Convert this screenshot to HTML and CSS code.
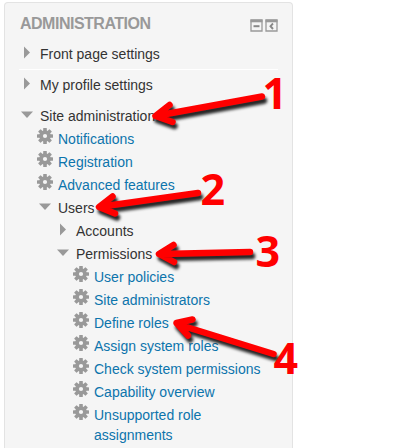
FILE: index.html
```html
<!DOCTYPE html>
<html lang="en">
<head>
<meta charset="utf-8">
<title>Administration</title>
<link rel="stylesheet" href="styles.css">
</head>
<body>
<svg class="defs" aria-hidden="true">
  <symbol id="gear" viewBox="0 0 16 16">
    <g fill="#999"><rect x="6.2" y="0" width="3.6" height="16" rx=".5"/><rect x="6.2" y="0" width="3.6" height="16" rx=".5" transform="rotate(45 8 8)"/><rect x="6.2" y="0" width="3.6" height="16" rx=".5" transform="rotate(90 8 8)"/><rect x="6.2" y="0" width="3.6" height="16" rx=".5" transform="rotate(135 8 8)"/><circle cx="8" cy="8" r="5.8"/></g>
    <circle cx="8" cy="8" r="2.1" fill="#f5f5f5"/>
  </symbol>
  <symbol id="right" viewBox="0 0 16 16"><path d="M5 1.500L11 7.500L5 13.500Z" fill="#999"/></symbol>
  <symbol id="down" viewBox="0 0 16 16"><path d="M2 4.500H14L8 11Z" fill="#999"/></symbol>
</svg>
<section class="block">
  <header class="head">
    <h2>ADMINISTRATION</h2>
    <div class="tools">
      <svg width="13" height="13" viewBox="0 0 13 13"><path d="M1 1H12V12H1Z" fill="none" stroke="#999" stroke-width="1.3"/><path d="M.5 2H12.5" stroke="#999" stroke-width="2.6"/><path d="M3.5 7.2H9.5" stroke="#888" stroke-width="2"/></svg>
      <svg width="13" height="13" viewBox="0 0 13 13"><path d="M1 1H12V12H1Z" fill="none" stroke="#999" stroke-width="1.3"/><path d="M.5 2H12.5" stroke="#999" stroke-width="2.6"/><path d="M8 4.5L5.5 7.2L8 10" fill="none" stroke="#888" stroke-width="1.9"/></svg>
    </div>
  </header>
  <ul class="tree">
    <li class="row root"><svg class="icon"><use href="#right"/></svg><span>Front page settings</span></li>
    <li class="row root ruled"><svg class="icon"><use href="#right"/></svg><span>My profile settings</span></li>
    <li class="row root open"><svg class="icon"><use href="#down"/></svg><span>Site administration</span></li>
    <li>
      <ul class="branch">
        <li class="row"><svg class="icon gear"><use href="#gear"/></svg><a>Notifications</a></li>
        <li class="row"><svg class="icon gear"><use href="#gear"/></svg><a>Registration</a></li>
        <li class="row"><svg class="icon gear"><use href="#gear"/></svg><a>Advanced features</a></li>
        <li class="row"><svg class="icon"><use href="#down"/></svg><span>Users</span></li>
        <li>
          <ul class="branch">
            <li class="row"><svg class="icon"><use href="#right"/></svg><span>Accounts</span></li>
            <li class="row"><svg class="icon"><use href="#down"/></svg><span>Permissions</span></li>
            <li>
              <ul class="branch">
                <li class="row"><svg class="icon gear"><use href="#gear"/></svg><a>User policies</a></li>
                <li class="row"><svg class="icon gear"><use href="#gear"/></svg><a>Site administrators</a></li>
                <li class="row"><svg class="icon gear"><use href="#gear"/></svg><a>Define roles</a></li>
                <li class="row"><svg class="icon gear"><use href="#gear"/></svg><a>Assign system roles</a></li>
                <li class="row"><svg class="icon gear"><use href="#gear"/></svg><a>Check system permissions</a></li>
                <li class="row"><svg class="icon gear"><use href="#gear"/></svg><a>Capability overview</a></li>
                <li class="row"><svg class="icon gear"><use href="#gear"/></svg><a>Unsupported role<br>assignments</a></li>
              </ul>
            </li>
          </ul>
        </li>
      </ul>
    </li>
  </ul>
</section>
<svg class="notes" width="410" height="448" viewBox="0 0 410 448">
  <g class="arrows">
    <path d="M262 96.500L158 115.500M169.500 105L155.500 116L172.500 122"/>
    <path d="M198 193L102 206.500M112.500 196.500L99 207L115 213.500"/>
    <path d="M250 252L162 254M173.500 245L159 254L174 262"/>
    <path d="M273.500 354L180 325M192.500 319.500L176.500 323L188 335.500"/>
  </g>
  <g class="numbers">
    <text x="262.500" y="109">1</text>
    <text x="200.500" y="205">2</text>
    <text x="255.500" y="267">3</text>
    <text x="273.500" y="374">4</text>
  </g>
</svg>
</body>
</html>
```

FILE: styles.css
```css
* { box-sizing: border-box; }
body {
  margin: 0;
  height: 448px;
  overflow: hidden;
  background: #fff;
  color: #333;
  font: 14px/20px "Liberation Sans", Arial, sans-serif;
}
.defs { display: none; }
.block {
  width: 289px;
  height: 446px;
  margin: 2px 0 0 4px;
  padding: 10px 14px 0;
  background: #f5f5f5;
  border: 1px solid #e3e3e3;
  border-bottom: 0;
  border-radius: 4px 4px 0 0;
}
.head {
  display: flex;
  align-items: center;
  justify-content: space-between;
  height: 22px;
  padding-left: 1px;
}
h2 {
  margin: 0;
  color: #999;
  font-size: 16px;
  letter-spacing: -0.5px;
  line-height: 22px;
}
.tools { display: flex; gap: 2px; padding-top: 2px; }
.tools svg { display: block; }
ul { margin: 0; padding: 0; list-style: none; }
.tree { padding-top: 4px; }
.row {
  display: flex;
  gap: 5px;
  padding-top: 3px;
  white-space: nowrap;
}
.row.root { padding: 5px 0; }
.row.ruled { border-top: 1px solid #fff; }
.row.root.open { padding: 6px 0 0; }
.icon { flex: none; width: 16px; height: 16px; margin-top: 1px; }
.gear { margin-top: -1px; }
.branch { padding-left: 18px; }
a { color: #0c74ac; }
.notes { position: absolute; top: 0; left: 0; }
.arrows {
  fill: none;
  stroke: #f00;
  stroke-width: 6.500px;
  stroke-linecap: round;
  stroke-linejoin: round;
  filter: drop-shadow(2px 4px 1.500px rgba(0, 0, 0, .85));
}
.numbers {
  fill: #f00;
  font: bold 43px "Open Sans", sans-serif;
}
```
